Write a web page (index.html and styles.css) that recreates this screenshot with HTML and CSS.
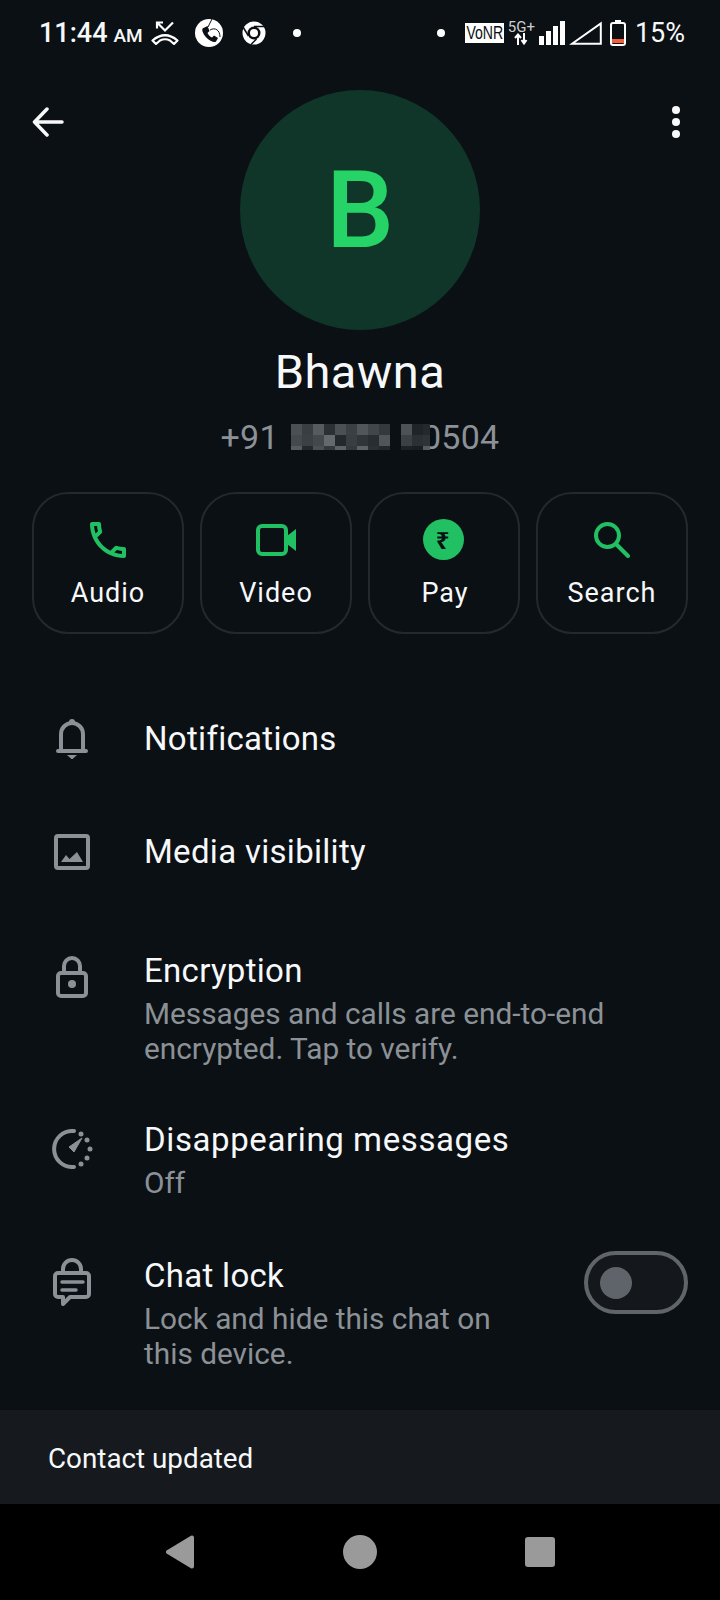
FILE: index.html
```html
<!DOCTYPE html>
<html lang="en">
<head>
  <meta charset="UTF-8">
  <title>Bhawna</title>
  <link rel="stylesheet" href="styles.css">
</head>
<body>
  <div class="screen">
    <!-- Status bar -->
    <div class="status">
      <div class="status-left">
        <span class="time">11:44</span>
        <span class="ampm">AM</span>
        <svg class="st-missed" width="28" height="24" viewBox="0 0 28 24">
          <path d="M1.500 19.500Q14 9 26.500 19.500L23 23L19 19.500Q14 17 9 19.500L5 23Z" fill="none" stroke="#fff" stroke-width="2.200" stroke-linejoin="round"/>
          <path d="M12 1.500H6V7.500M6 1.500L14 9.500L22 1.500" fill="none" stroke="#fff" stroke-width="2.200"/>
        </svg>
        <svg class="st-circle" width="28" height="28" viewBox="0 0 28 28">
          <circle cx="14" cy="14" r="14" fill="#fff"/>
          <path d="M8.500 9l4-2 2 5-2 2c1 2 2.500 3.500 4.500 4.500l2-2 4 2.500-2 3.500c-1 1-3 .5-5-.5-4-2-7-5.500-8.500-9.500-.5-2 0-3 .5-3.500z" fill="#0b1014"/>
          <path d="M13 8L17 0M15 11C20 8 25 11 25 18" fill="none" stroke="#0b1014" stroke-width="1"/>
        </svg>
        <svg class="st-chrome" width="24" height="24" viewBox="0 0 24 24">
          <circle cx="12" cy="12" r="11.500" fill="#fff"/>
          <circle cx="12" cy="12" r="6.500" fill="#0b1014"/>
          <circle cx="12" cy="12" r="4" fill="#fff"/>
          <path d="M12 5.500H23M6.500 15L1 6M14.500 18L9 23.500" stroke="#0b1014" stroke-width="1.500"/>
        </svg>
        <span class="st-dot st-dot-left"></span>
      </div>
      <div class="status-right">
        <span class="st-dot"></span>
        <div class="vonr"><span>VoNR</span></div>
        <div class="net">
          <span class="net-label">5G+</span>
          <svg width="14" height="12" viewBox="0 0 14 12">
            <path d="M4 12V3M1 5L4 1.500L7 5M10 0V9M7.500 7L10 10.500L12.500 7" fill="none" stroke="#fff" stroke-width="2"/>
          </svg>
        </div>
        <svg class="st-bars" width="26" height="24" viewBox="0 0 26 24">
          <rect x="0" y="15" width="5" height="9" fill="#fff"/>
          <rect x="7" y="10" width="5" height="14" fill="#fff"/>
          <rect x="14" y="5" width="5" height="19" fill="#fff"/>
          <rect x="21" y="0" width="5" height="24" fill="#fff"/>
        </svg>
        <svg class="st-tri" width="33" height="24" viewBox="0 0 33 24">
          <path d="M3 22.800L31.800 2.500V22.800Z" fill="none" stroke="#fff" stroke-width="2"/>
        </svg>
        <svg class="st-batt" width="16" height="26" viewBox="0 0 16 26">
          <rect x="5" y="0" width="6" height="3" fill="#fff"/>
          <rect x="1" y="3" width="14" height="22" rx="2" fill="none" stroke="#fff" stroke-width="2"/>
          <rect x="2" y="19" width="12" height="4" fill="#f0603a"/>
        </svg>
        <span class="pct">15%</span>
      </div>
    </div>

    <!-- Profile head -->
    <div class="profile">
      <svg class="back" width="32" height="30" viewBox="0 0 32 30">
        <path d="M30 15H3M15 2L2.500 15L15 28" fill="none" stroke="#f7f8fa" stroke-width="3.500" stroke-linecap="round" stroke-linejoin="round"/>
      </svg>
      <svg class="more" width="10" height="34" viewBox="0 0 10 34">
        <circle cx="5" cy="5" r="4" fill="#f7f8fa"/>
        <circle cx="5" cy="17" r="4" fill="#f7f8fa"/>
        <circle cx="5" cy="29" r="4" fill="#f7f8fa"/>
      </svg>
      <div class="avatar">B</div>
      <div class="name">Bhawna</div>
      <div class="phone">
        <span>+91</span>
        <svg class="mosaic" width="139" height="26" viewBox="0 0 139 26" shape-rendering="crispEdges">
          <rect x="0" y="0" width="11" height="11" fill="#4a5054"/><rect x="11" y="0" width="11" height="11" fill="#383e42"/><rect x="22" y="0" width="11" height="11" fill="#555b5f"/><rect x="33" y="0" width="11" height="11" fill="#2a3034"/><rect x="44" y="0" width="11" height="11" fill="#4a5054"/><rect x="55" y="0" width="11" height="11" fill="#3a4044"/><rect x="66" y="0" width="11" height="11" fill="#50565a"/><rect x="77" y="0" width="11" height="11" fill="#40464a"/><rect x="88" y="0" width="11" height="11" fill="#33393d"/>
          <rect x="0" y="11" width="11" height="11" fill="#43494d"/><rect x="11" y="11" width="11" height="11" fill="#3a4044"/><rect x="22" y="11" width="11" height="11" fill="#42484c"/><rect x="33" y="11" width="11" height="11" fill="#63696d"/><rect x="44" y="11" width="11" height="11" fill="#22282c"/><rect x="55" y="11" width="11" height="11" fill="#383e42"/><rect x="66" y="11" width="11" height="11" fill="#2f3539"/><rect x="77" y="11" width="11" height="11" fill="#272d31"/><rect x="88" y="11" width="11" height="11" fill="#4f5559"/>
          <rect x="0" y="22" width="11" height="4" fill="#555b5f"/><rect x="11" y="22" width="11" height="4" fill="#23292d"/><rect x="22" y="22" width="11" height="4" fill="#4a5054"/><rect x="33" y="22" width="11" height="4" fill="#33393d"/><rect x="44" y="22" width="11" height="4" fill="#5c6266"/><rect x="55" y="22" width="11" height="4" fill="#33393d"/><rect x="66" y="22" width="11" height="4" fill="#5c6266"/><rect x="77" y="22" width="11" height="4" fill="#2a3034"/><rect x="88" y="22" width="11" height="4" fill="#22282c"/>
          <rect x="110" y="0" width="11" height="11" fill="#4c5256"/><rect x="121" y="0" width="11" height="11" fill="#1e2428"/><rect x="132" y="0" width="7" height="11" fill="#23292d"/>
          <rect x="110" y="11" width="11" height="11" fill="#3a4044"/><rect x="121" y="11" width="11" height="11" fill="#2a3034"/><rect x="132" y="11" width="7" height="11" fill="#2d3337"/>
          <rect x="110" y="22" width="11" height="4" fill="#1c2226"/><rect x="121" y="22" width="11" height="4" fill="#181e22"/><rect x="132" y="22" width="7" height="4" fill="#555b5f"/>
        </svg>
        <span>0504</span>
      </div>
    </div>

    <!-- Action buttons -->
    <div class="actions">
      <div class="action">
        <svg class="action-icon" width="36" height="36" viewBox="3 3 18 18">
          <path fill="#21c063" d="M6.540 5c.06.89.21 1.760.45 2.590l-1.200 1.200c-.41-1.200-.67-2.470-.76-3.790h1.510m9.860 12.020c.85.24 1.720.39 2.600.45v1.490c-1.320-.09-2.590-.35-3.800-.75l1.200-1.190M7.500 3H4c-.55 0-1 .45-1 1 0 9.390 7.610 17 17 17 .55 0 1-.45 1-1v-3.490c0-.55-.45-1-1-1-1.240 0-2.450-.2-3.570-.57-.1-.04-.21-.05-.31-.05-.26 0-.51.1-.71.29l-2.200 2.200c-2.830-1.450-5.150-3.760-6.590-6.590l2.200-2.200c.28-.28.36-.67.25-1.020C8.700 6.450 8.500 5.250 8.500 4c0-.55-.45-1-1-1z"/>
        </svg>
        <span>Audio</span>
      </div>
      <div class="action">
        <svg class="action-icon" width="40" height="36" viewBox="0 0 40 36">
          <rect x="2" y="4" width="28" height="28" rx="4" fill="none" stroke="#21c063" stroke-width="4"/>
          <path d="M31 14L40 7V29L31 22Z" fill="#21c063"/>
        </svg>
        <span>Video</span>
      </div>
      <div class="action action-pay">
        <div class="rupee">₹</div>
        <span>Pay</span>
      </div>
      <div class="action">
        <svg class="action-icon" width="36" height="36" viewBox="0 0 36 36">
          <circle cx="13.500" cy="13.500" r="11.500" fill="none" stroke="#21c063" stroke-width="4"/>
          <path d="M22 22L34 34" stroke="#21c063" stroke-width="4" stroke-linecap="round"/>
        </svg>
        <span>Search</span>
      </div>
    </div>

    <!-- Settings list -->
    <div class="list">
      <div class="row row-single">
        <svg class="row-icon" width="32" height="40" viewBox="0 0 32 40">
          <circle cx="16" cy="3" r="3" fill="#8b9196"/>
          <path d="M5 32V15a11 11 0 0 1 22 0V32M2 32H30" fill="none" stroke="#8b9196" stroke-width="4" stroke-linecap="round"/>
          <path d="M11 36H21L16 40.500Z" fill="#8b9196"/>
        </svg>
        <div class="row-title">Notifications</div>
      </div>
      <div class="row row-single">
        <svg class="row-icon" width="36" height="36" viewBox="0 0 36 36">
          <rect x="2" y="2" width="32" height="32" rx="2" fill="none" stroke="#8b9196" stroke-width="4"/>
          <path d="M7 28L12 21L15.500 25L23 18L29 28Z" fill="#8b9196"/>
        </svg>
        <div class="row-title">Media visibility</div>
      </div>
      <div class="row row-enc">
        <svg class="row-icon icon-lock" width="32" height="42" viewBox="0 0 32 42">
          <path d="M8 16V10a8 8 0 0 1 16 0V16" fill="none" stroke="#8b9196" stroke-width="4"/>
          <rect x="2" y="17" width="28" height="23" rx="3" fill="none" stroke="#8b9196" stroke-width="4"/>
          <circle cx="16" cy="28" r="4" fill="#8b9196"/>
        </svg>
        <div>
          <div class="row-title">Encryption</div>
          <div class="row-sub">Messages and calls are end-to-end<br>encrypted. Tap to verify.</div>
        </div>
      </div>
      <div class="row row-dis">
        <svg class="row-icon icon-timer" width="41" height="40" viewBox="0 0 41 40">
          <path d="M22 2.100A18 18 0 1 0 22 37.900" fill="none" stroke="#8b9196" stroke-width="4" stroke-linecap="round"/>
          <circle cx="29" cy="5" r="2.500" fill="#8b9196"/>
          <circle cx="35" cy="11" r="2.500" fill="#8b9196"/>
          <circle cx="38" cy="20" r="2.500" fill="#8b9196"/>
          <circle cx="35" cy="29" r="2.500" fill="#8b9196"/>
          <circle cx="29" cy="35" r="2.500" fill="#8b9196"/>
          <path d="M17 18L30 9L22 23Z" fill="#8b9196" stroke="#8b9196" stroke-linejoin="round"/>
        </svg>
        <div>
          <div class="row-title title-wide">Disappearing messages</div>
          <div class="row-sub">Off</div>
        </div>
      </div>
      <div class="row row-chat">
        <svg class="row-icon icon-chat" width="38" height="48" viewBox="0 0 38 48">
          <path d="M10 15V11a9 9 0 0 1 18 0V15" fill="none" stroke="#8b9196" stroke-width="4"/>
          <path d="M5 15H33a3 3 0 0 1 3 3V36a3 3 0 0 1-3 3H17L10 46V39H5a3 3 0 0 1-3-3V18a3 3 0 0 1 3-3Z" fill="none" stroke="#8b9196" stroke-width="4" stroke-linejoin="round"/>
          <path d="M9 24H30M9 32H23" stroke="#8b9196" stroke-width="3.500" stroke-linecap="round"/>
        </svg>
        <div>
          <div class="row-title">Chat lock</div>
          <div class="row-sub">Lock and hide this chat on<br>this device.</div>
        </div>
        <div class="toggle"><div class="knob"></div></div>
      </div>
    </div>

    <!-- Snackbar + navigation -->
    <div class="snack">Contact updated</div>
    <div class="nav">
      <svg width="30" height="34" viewBox="0 0 30 34">
        <path d="M27 2.500V31.500L3 17Z" fill="#9a9a9a" stroke="#9a9a9a" stroke-width="4" stroke-linejoin="round"/>
      </svg>
      <div class="nav-home"></div>
      <div class="nav-recent"></div>
    </div>
  </div>
</body>
</html>
```

FILE: styles.css
```css
html, body {
  margin: 0;
  padding: 0;
  background-color: #0b1014;
}
body {
  font-family: Roboto, "Noto Sans", sans-serif;
  color: #f7f8fa;
}
.screen {
  width: 720px;
  height: 1600px;
  overflow: hidden;
  display: flex;
  flex-direction: column;
}

/* status bar */
.status {
  height: 66px;
  flex: none;
  display: flex;
  justify-content: space-between;
  align-items: center;
  padding: 0 35px 0 39px;
}
.status-left, .status-right {
  display: flex;
  align-items: center;
}
.time {
  font-size: 27px;
  font-weight: 500;
}
.ampm {
  font-size: 19px;
  font-weight: 500;
  margin-left: 6px;
  margin-top: 4px;
}
.st-missed {
  margin-left: 8px;
}
.st-circle {
  margin-left: 16px;
}
.st-chrome {
  margin-left: 19px;
}
.st-dot {
  width: 8px;
  height: 8px;
  border-radius: 50%;
  background-color: #fff;
}
.st-dot-left {
  margin-left: 27px;
}
.vonr {
  width: 39px;
  height: 20px;
  margin-left: 20px;
  background-color: #fff;
  color: #0b1014;
  display: flex;
  justify-content: center;
  font-family: "Liberation Sans", sans-serif;
  font-size: 19px;
  line-height: 20px;
}
.vonr span {
  flex: none;
  transform: scaleX(0.74);
}
.net {
  width: 29px;
  margin-left: 3px;
  display: flex;
  flex-direction: column;
  align-items: center;
  margin-top: -1px;
}
.net-label {
  font-size: 15px;
  line-height: 12px;
  color: #cfcfcf;
}
.st-bars {
  margin-left: 3px;
}
.st-tri {
  margin-left: 4px;
}
.st-batt {
  margin-left: 8px;
  margin-top: -1px;
}
.pct {
  font-size: 27px;
  margin-left: 9px;
}

/* profile */
.profile {
  position: relative;
  display: flex;
  flex-direction: column;
  align-items: center;
  padding-top: 24px;
}
.back {
  position: absolute;
  left: 32px;
  top: 41px;
}
.more {
  position: absolute;
  left: 671px;
  top: 39px;
}
.avatar {
  width: 240px;
  height: 240px;
  border-radius: 50%;
  background-color: #103529;
  color: #25d366;
  font-size: 108px;
  font-weight: 500;
  line-height: 240px;
  text-align: center;
}
.name {
  font-size: 47px;
  line-height: 56px;
  margin-top: 14px;
  letter-spacing: 0.5px;
}
.phone {
  display: flex;
  align-items: center;
  height: 40px;
  margin-top: 17px;
  font-size: 34px;
  letter-spacing: 0.3px;
  color: #8b9196;
}
.mosaic {
  position: relative;
  z-index: 1;
  margin-left: 12px;
  margin-right: -8px;
}

/* buttons */
.actions {
  display: grid;
  grid-template-columns: repeat(4, 152px);
  gap: 16px;
  margin: 35px 0 0 32px;
}
.action {
  height: 142px;
  box-sizing: border-box;
  border: 2px solid #25292d;
  border-radius: 36px;
  display: flex;
  flex-direction: column;
  align-items: center;
  padding-top: 28px;
  font-size: 27px;
  letter-spacing: 1px;
}
.action span {
  margin-top: 19px;
  line-height: 32px;
}
.action-icon {
  display: block;
}
.action-pay {
  padding-left: 2px;
}
.rupee {
  width: 41px;
  height: 41px;
  margin-top: -3px;
  margin-bottom: -2px;
  margin-right: 4px;
  border-radius: 50%;
  background-color: #21c063;
  color: #0b1014;
  font-family: "Noto Sans", "DejaVu Sans", sans-serif;
  font-size: 24px;
  font-weight: bold;
  line-height: 41px;
  text-align: center;
}

/* list */
.list {
  flex: 1;
  margin-top: 48px;
}
.row {
  display: flex;
  align-items: flex-start;
  position: relative;
  padding-left: 144px;
}
.row-single {
  height: 113px;
  align-items: center;
}
.row-enc {
  padding-top: 42px;
}
.row-dis {
  padding-top: 53px;
}
.row-chat {
  padding-top: 55px;
}
/* the icons hang in the left gutter, centred on x=72 */
.row-icon {
  position: absolute;
  left: 72px;
  margin-left: -16px;
}
.row-single:nth-child(2) .row-icon {
  margin-left: -18px;
}
.icon-lock {
  top: 48px;
}
.icon-timer {
  top: 63px;
  margin-left: -20px;
}
.icon-chat {
  top: 58px;
  margin-left: -19px;
}
.row-title {
  font-size: 33px;
  line-height: 42px;
  letter-spacing: 0.3px;
}
.title-wide {
  letter-spacing: 0.6px;
}
.row-sub {
  font-size: 29.800px;
  line-height: 35px;
  margin-top: 4px;
  color: #8b9196;
}
.toggle {
  position: absolute;
  left: 584px;
  top: 51px;
  width: 104px;
  height: 63px;
  box-sizing: border-box;
  border: 4px solid #5f656a;
  border-radius: 32px;
  background-color: #14181c;
  display: flex;
  align-items: center;
  padding-left: 12px;
}
.knob {
  width: 32px;
  height: 32px;
  border-radius: 50%;
  background-color: #5e6469;
}

/* bottom */
.snack {
  flex: none;
  height: 94px;
  box-sizing: border-box;
  padding: 3px 0 0 48px;
  background-color: #161a1e;
  font-size: 27.800px;
  line-height: 91px;
}
.nav {
  flex: none;
  height: 96px;
  background-color: #000;
  display: flex;
  justify-content: center;
  align-items: center;
  gap: 148px;
}
.nav-home {
  width: 34px;
  height: 34px;
  border-radius: 50%;
  background-color: #9a9a9a;
}
.nav-recent {
  width: 30px;
  height: 30px;
  border-radius: 3px;
  background-color: #9a9a9a;
}
```
